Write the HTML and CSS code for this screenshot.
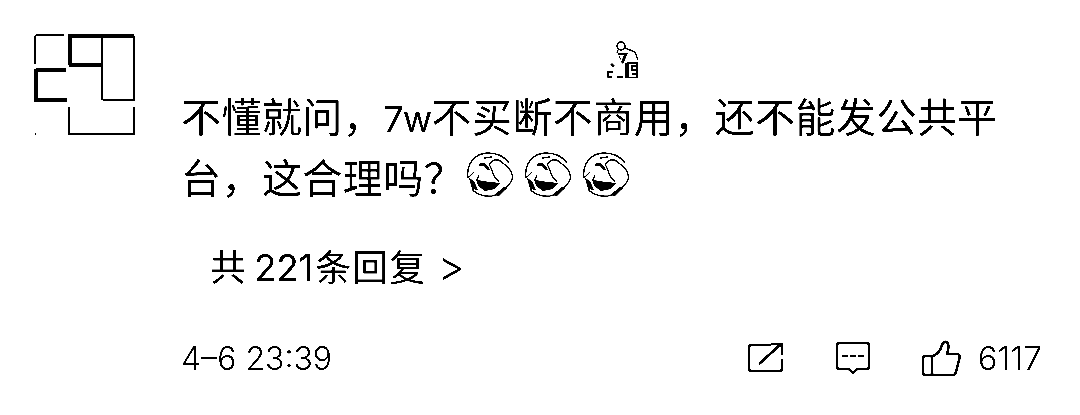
FILE: index.html
```html
<!DOCTYPE html>
<html lang="zh-CN">
<head>
<meta charset="utf-8">
<title>评论</title>
<link rel="stylesheet" href="styles.css">
</head>
<body>
<svg class="defs" width="0" height="0" aria-hidden="true">
  <symbol id="face" viewBox="0 0 48 46">
    <path class="t1" d="M1 26C-1 12 8 1 21 1c9 0 16 3 21 10"/>
    <path class="t1" d="M2 25l5-5M10 28l2-5"/>
    <path class="t1" d="M22 12l5-4c4-1 7 1 10 4 4 3 7 6 8 10 1 3 0 6-1 8l-6 7"/>
    <path class="t1" d="M22 12l2 4 3 8 5 6"/>
    <path class="t2" d="M12 13l5-1 5 6"/>
    <path class="t1" d="M17 6l8-1"/>
    <path class="fill" d="M9 27l6 2 18 2-5 6-10 2-7-5z"/>
    <path class="fill" d="M2 26l5 3 4 9-6-1z"/>
    <path class="t1" d="M5 37c5 6 15 9 24 6"/>
    <path class="fill" d="M27 43l10-8 3 1-8 8z"/>
  </symbol>
</svg>
<main class="comment">
  <svg class="avatar" viewBox="0 0 102 102" aria-hidden="true">
    <path class="thin" d="M30 1H3Q1 1 1 3V30M68 1V66M1 100h1"/>
    <path class="bold" d="M36 31V2H100M35 31H69"/>
    <path class="med" d="M100 2V66H69"/>
    <path class="bold" d="M2 35V66H33M2 36H32"/>
    <path class="thin" d="M35 73V100H100V73"/>
  </svg>
  <div class="body">
    <div class="sticker-row">
      <svg class="sticker" viewBox="0 0 34 37" aria-hidden="true">
        <circle class="sk" cx="16" cy="5" r="4"/>
        <path class="sk" d="M20 7l10 4 3 8M12 12l1-3"/>
        <path class="ink" d="M13 12h10l-5 11-2-2 3-7h-5l2 4-1 1z"/>
        <path class="ink" d="M7 22l3 3-2 1-3-2z"/>
        <path class="sk" d="M2 31h6M3 31v5h4M12 36h6"/>
        <path class="box" d="M21 22v15M23 22h9v15h-9zM32 25h-5v4h5M27 33h5"/>
      </svg>
    </div>
    <p class="text">不懂就问，<span class="latin">7w</span>不买断不商用，还不能发公共平台，这合理吗？<span class="faces"><svg class="face"><use href="#face"/></svg><svg class="face"><use href="#face"/></svg><svg class="face"><use href="#face"/></svg></span></p>
    <div class="reply">共<span class="num">221</span>条回复 <span class="chev">&gt;</span></div>
    <div class="footer">
      <time class="date">4–6 23:39</time>
      <div class="actions">
        <svg class="icon share" viewBox="0 0 36 30" aria-hidden="true">
          <path class="st" d="M24 2H4Q2 2 2 4V26Q2 28 4 28H33Q35 28 35 26V16M12 21L34 1M24 1H35V12"/>
        </svg>
        <svg class="icon chat" viewBox="0 0 34 33" aria-hidden="true">
          <path class="st" d="M3 1H31Q33 1 33 3V25Q33 27 31 27H21L17 31L13 27H3Q1 27 1 25V3Q1 1 3 1Z"/>
          <path class="st" d="M6 14H12M14 14H20M22 14H28"/>
        </svg>
        <div class="like">
          <svg class="icon thumb" viewBox="0 0 39 37" aria-hidden="true">
            <path class="st" d="M10 16V35M2 16H11C16 14 19 9 20 5 21 1 25 1 26 4 27 7 26 11 25 14H35C38 14 38 17 37 20L34 32C33 35 32 35 30 35H3Q1 35 1 33V18Q1 16 3 16"/>
          </svg>
          <span class="count">6117</span>
        </div>
      </div>
    </div>
  </div>
</main>
</body>
</html>
```
FILE: styles.css
```css
html, body {
  margin: 0;
  padding: 0;
  background: #fff;
}
body {
  width: 1080px;
  height: 415px;
  overflow: hidden;
  color: #000;
  font-family: Inter, "Noto Sans CJK SC", sans-serif;
  filter: grayscale(1) contrast(8);
}
.defs { position: absolute; }
.comment {
  display: flex;
  align-items: flex-start;
  padding: 34px 38px 0 34px;
}
.avatar {
  flex: none;
  width: 102px;
  height: 102px;
  fill: none;
  stroke: #000;
}
.thin { stroke-width: 1.5; }
.med { stroke-width: 2.5; }
.bold { stroke-width: 3.5; }
.body {
  flex: 1;
  min-width: 0;
  margin-left: 45px;
}
.sticker-row {
  display: flex;
  height: 54px;
  padding: 7px 0 0 424px;
  box-sizing: border-box;
}
.sticker { width: 34px; height: 37px; }
.sk { fill: none; stroke: #000; stroke-width: 1.4; }
.ink { fill: #000; }
.box { fill: none; stroke: #000; stroke-width: 2; }
.text {
  margin: 0;
  width: 830px;
  font-size: 40px;
  letter-spacing: 0.45px;
  line-height: 60px;
}
.latin { font-size: 36px; letter-spacing: -0.8px; }
.faces {
  display: inline-flex;
  gap: 10px;
  vertical-align: -5px;
  margin-left: 3px;
}
.face { width: 48px; height: 46px; }
.t1 { fill: none; stroke: #000; stroke-width: 1.3; }
.t2 { fill: none; stroke: #000; stroke-width: 2.6; }
.fill { fill: #000; }
.reply {
  margin: 33px 0 0 29px;
  font-size: 36px;
  letter-spacing: 1px;
  line-height: 48px;
}
.num { margin: 0 2px 0 7px; font-size: 37px; letter-spacing: -0.3px; }
.chev { margin-left: 0; font-size: 42px; font-weight: 300; }
.footer {
  display: flex;
  align-items: center;
  justify-content: space-between;
  margin-top: 46px;
}
.date { font-size: 32px; font-weight: 300; }
.actions {
  display: flex;
  align-items: center;
}
.icon { display: block; }
.st { fill: none; stroke: #000; stroke-width: 2.6; stroke-linejoin: round; }
.share { width: 36px; height: 30px; margin-right: 53px; }
.chat { width: 34px; height: 33px; margin-right: 52px; }
.like { display: flex; align-items: center; gap: 17px; }
.thumb { width: 39px; height: 37px; }
.count { font-size: 33px; font-weight: 300; }
```
